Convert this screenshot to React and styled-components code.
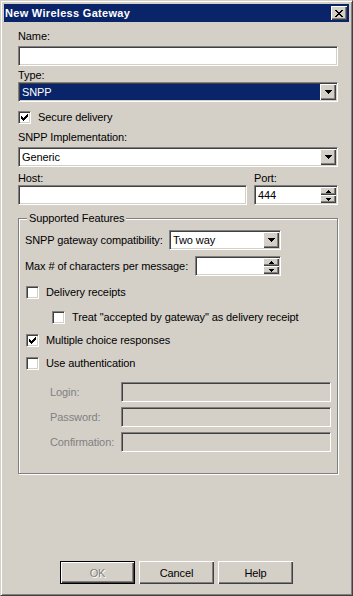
import React from 'react';
import styled, { css, createGlobalStyle } from 'styled-components';

const GlobalStyle = createGlobalStyle`
  html, body { margin: 0; padding: 0; background: #d4d0c8; }
  body {
    font-family: "Liberation Sans", Arial, sans-serif;
    font-size: 11px;
    letter-spacing: -0.1px;
    color: #000;
  }
  * { box-sizing: border-box; }
`;

// classic 3d edges
const sunken = css`
  border: 1px solid;
  border-color: #808080 #fff #fff #808080;
  box-shadow: inset 1px 1px #404040, inset -1px -1px #d4d0c8;
`;

const raised = css`
  background: #d4d0c8;
  box-shadow: inset 1px 1px #fff, inset -1px -1px #404040, inset -2px -2px #808080;
`;

const Window = styled.div`
  width: 353px;
  height: 596px;
  display: flex;
  flex-direction: column;
  background: #d4d0c8;
  border: 1px solid;
  border-color: #d4d0c8 #404040 #404040 #d4d0c8;
  box-shadow: inset 1px 1px #fff, inset -1px -1px #808080;
  padding: 3px;
`;

const TitleBar = styled.div`
  height: 18px;
  flex: none;
  display: flex;
  align-items: center;
  background: #0a246a;
  padding: 0 2px 0 1px;
`;

const Title = styled.div`
  flex: 1;
  color: #fff;
  font-weight: bold;
  font-size: 11px;
  letter-spacing: 0.3px;
  white-space: nowrap;
`;

const CaptionButton = styled.div`
  width: 16px;
  height: 14px;
  display: flex;
  align-items: center;
  justify-content: center;
  ${raised}
`;

const Body = styled.div`
  flex: 1;
  display: flex;
  flex-direction: column;
  padding: 8px 11px 0 14px;
`;

const Label = styled.div`
  height: 13px;
  line-height: 13px;
  white-space: nowrap;
  margin-top: ${p => p.$mt || 0}px;
  width: ${p => (p.$w ? `${p.$w}px` : 'auto')};
  flex: none;
  color: ${p => (p.$disabled ? '#808080' : '#000')};
`;

const TextBox = styled.div`
  ${sunken}
  height: 20px;
  display: flex;
  align-items: center;
  padding: 0 3px;
  margin-top: ${p => p.$mt || 0}px;
  background: ${p => (p.$disabled ? '#d4d0c8' : '#fff')};
  flex: ${p => (p.$grow ? '1' : 'none')};
`;

const Combo = styled.div`
  ${sunken}
  height: 20px;
  display: flex;
  padding: 1px;
  background: #fff;
  margin-top: ${p => p.$mt || 0}px;
  width: ${p => p.$w}px;
  flex: none;
`;

const ComboValue = styled.div`
  flex: 1;
  display: flex;
  align-items: center;
  padding-left: 2px;
  white-space: nowrap;
  ${p =>
    p.$selected &&
    css`
      background: #0a246a;
      color: #fff;
    `}
`;

const DropButton = styled.div`
  width: 16px;
  height: 16px;
  flex: none;
  display: flex;
  align-items: center;
  justify-content: center;
  ${raised}
`;

const SpinValue = styled.div`
  flex: 1;
  display: flex;
  align-items: center;
  padding-left: 2px;
`;

const SpinButtons = styled.div`
  width: 16px;
  flex: none;
  display: flex;
  flex-direction: column;
`;

const SpinHalf = styled.div`
  height: 8px;
  display: flex;
  align-items: center;
  justify-content: center;
  ${raised}
`;

const Row = styled.div`
  display: flex;
  align-items: ${p => p.$align || 'center'};
  gap: ${p => p.$gap || 0}px;
  margin-top: ${p => p.$mt || 0}px;
  margin-left: ${p => p.$ml || 0}px;
`;

const Column = styled.div`
  display: flex;
  flex-direction: column;
  flex: ${p => (p.$w ? 'none' : '1')};
  width: ${p => (p.$w ? `${p.$w}px` : 'auto')};
`;

const CheckRow = styled.div`
  display: flex;
  align-items: center;
  height: 13px;
  margin-top: ${p => p.$mt || 0}px;
  margin-left: ${p => p.$ml || 0}px;
`;

const CheckBox = styled.span`
  ${sunken}
  width: 13px;
  height: 13px;
  flex: none;
  background: #fff;
  display: flex;
  align-items: center;
  justify-content: center;
`;

const CheckText = styled.span`
  margin-left: 7px;
  white-space: nowrap;
  line-height: 13px;
`;

const Group = styled.fieldset`
  margin: 7px 0 0 0;
  padding: 0 6px 21px 6px;
  border: 1px solid #808080;
  box-shadow: inset 1px 1px #fff, 1px 1px #fff;
  min-inline-size: 0;
`;

const Legend = styled.legend`
  margin-left: 2px;
  padding: 0 2px;
  height: 13px;
  line-height: 13px;
  background: #d4d0c8;
`;

const ButtonRow = styled.div`
  flex: none;
  display: flex;
  justify-content: center;
  gap: 4px;
  margin-bottom: 8px;
`;

const Button = styled.div`
  width: 75px;
  height: 23px;
  display: flex;
  align-items: center;
  justify-content: center;
  ${raised}
  ${p =>
    p.$default &&
    css`
      border: 1px solid #000;
    `}
  color: ${p => (p.$disabled ? '#808080' : '#000')};
  text-shadow: ${p => (p.$disabled ? '1px 1px #fff' : 'none')};
`;

// tiny pixel glyphs
function Pixels({ rows }) {
  const w = rows[0].length;
  const h = rows.length;
  const rects = [];
  rows.forEach((r, y) =>
    r.split('').forEach((c, x) => {
      if (c === 'X') rects.push(<rect key={`${x}-${y}`} x={x} y={y} width="1" height="1" />);
    })
  );
  return (
    <svg width={w} height={h} viewBox={`0 0 ${w} ${h}`} shapeRendering="crispEdges" fill="#000">
      {rects}
    </svg>
  );
}

const CLOSE = ['XX....XX', '.XX..XX.', '..XXXX..', '...XX...', '..XXXX..', '.XX..XX.', 'XX....XX'];
const DOWN = ['XXXXXXX', '.XXXXX.', '..XXX..', '...X...'];
const UP_SMALL = ['..X..', '.XXX.', 'XXXXX'];
const DOWN_SMALL = ['XXXXX', '.XXX.', '..X..'];
const CHECK = ['......X', '.....XX', 'X...XXX', 'XX.XXX.', 'XXXXX..', '.XXX...', '..X....'];

function Check({ checked, label, mt, ml }) {
  return (
    <CheckRow $mt={mt} $ml={ml}>
      <CheckBox>{checked && <Pixels rows={CHECK} />}</CheckBox>
      <CheckText>{label}</CheckText>
    </CheckRow>
  );
}

function Select({ value, selected, w, mt }) {
  return (
    <Combo $w={w} $mt={mt}>
      <ComboValue $selected={selected}>{value}</ComboValue>
      <DropButton>
        <Pixels rows={DOWN} />
      </DropButton>
    </Combo>
  );
}

function Spinner({ value, w, mt }) {
  return (
    <Combo $w={w} $mt={mt}>
      <SpinValue>{value}</SpinValue>
      <SpinButtons>
        <SpinHalf>
          <Pixels rows={UP_SMALL} />
        </SpinHalf>
        <SpinHalf>
          <Pixels rows={DOWN_SMALL} />
        </SpinHalf>
      </SpinButtons>
    </Combo>
  );
}

export default function App() {
  return (
    <>
      <GlobalStyle />
      <Window>
        <TitleBar>
          <Title>New Wireless Gateway</Title>
          <CaptionButton>
            <Pixels rows={CLOSE} />
          </CaptionButton>
        </TitleBar>

        <Body>
          <Label>Name:</Label>
          <TextBox $mt={3} />
          <Label $mt={3}>Type:</Label>
          <Select value="SNPP" selected w={320} />
          <Check checked label="Secure delivery" mt={9} />
          <Label $mt={7}>SNPP Implementation:</Label>
          <Select value="Generic" w={320} mt={3} />

          <Row $align="flex-start" $gap={7} $mt={5}>
            <Column>
              <Label>Host:</Label>
              <TextBox />
            </Column>
            <Column $w={84}>
              <Label>Port:</Label>
              <Spinner value="444" w={84} />
            </Column>
          </Row>

          <Group>
            <Legend>Supported Features</Legend>
            <Row $mt={5}>
              <Label $w={144}>SNPP gateway compatibility:</Label>
              <Select value="Two way" w={112} />
            </Row>
            <Row $mt={6}>
              <Label $w={170}>Max # of characters per message:</Label>
              <Spinner value="" w={86} />
            </Row>
            <Check label="Delivery receipts" mt={10} ml={1} />
            <Check label={'Treat "accepted by gateway" as delivery receipt'} mt={12} ml={27} />
            <Check checked label="Multiple choice responses" mt={10} ml={1} />
            <Check label="Use authentication" mt={10} ml={1} />
            <Row $mt={12} $ml={25}>
              <Label $w={71} $disabled>Login:</Label>
              <TextBox $disabled $grow />
            </Row>
            <Row $mt={5} $ml={25}>
              <Label $w={71} $disabled>Password:</Label>
              <TextBox $disabled $grow />
            </Row>
            <Row $mt={5} $ml={25}>
              <Label $w={71} $disabled>Confirmation:</Label>
              <TextBox $disabled $grow />
            </Row>
          </Group>
        </Body>

        <ButtonRow>
          <Button $default $disabled>OK</Button>
          <Button>Cancel</Button>
          <Button>Help</Button>
        </ButtonRow>
      </Window>
    </>
  );
}
